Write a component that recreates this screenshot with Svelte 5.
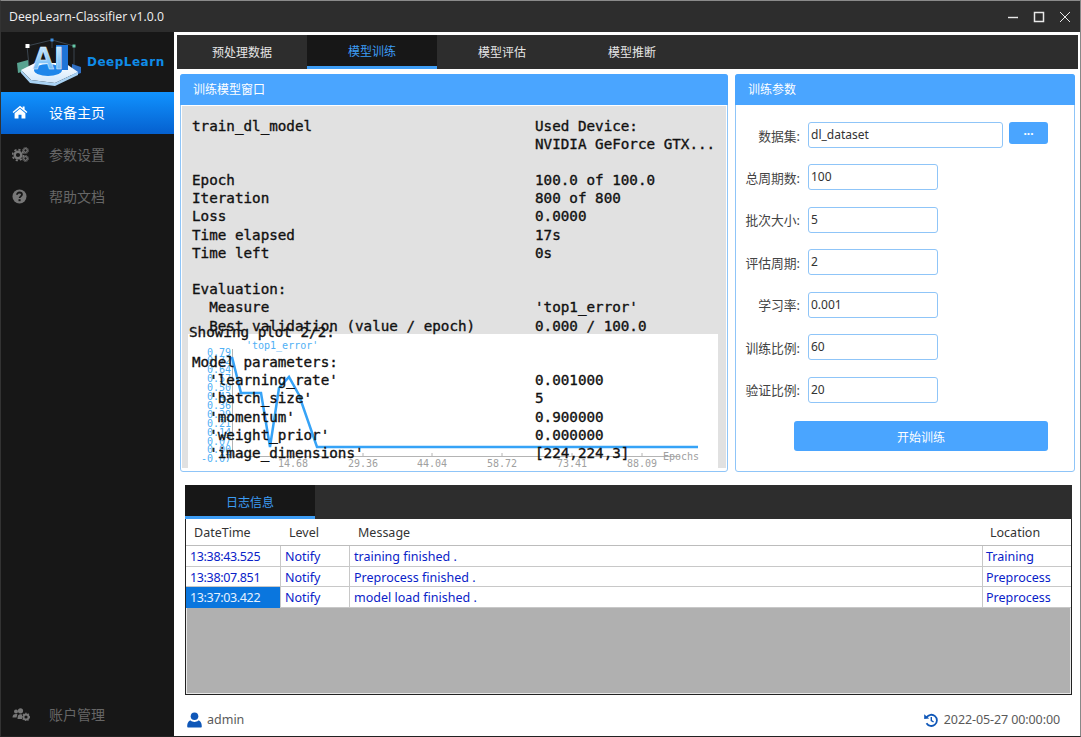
<script>
  const navTop = [
    { id: 'home', label: '设备主页', active: true },
    { id: 'cogs', label: '参数设置' },
    { id: 'help', label: '帮助文档' }
  ];
  const tabs = ['预处理数据', '模型训练', '模型评估', '模型推断'];
  const lines = [
    ['train_dl_model', 'Used Device:'],
    ['', 'NVIDIA GeForce GTX...'],
    ['', ''],
    ['Epoch', '100.0 of 100.0'],
    ['Iteration', '800 of 800'],
    ['Loss', '0.0000'],
    ['Time elapsed', '17s'],
    ['Time left', '0s'],
    ['', ''],
    ['Evaluation:', ''],
    ['  Measure', "'top1_error'"],
    ['  Best validation (value / epoch)', '0.000 / 100.0'],
    ['', ''],
    ['Model parameters:', ''],
    ["  'learning_rate'", '0.001000'],
    ["  'batch_size'", '5'],
    ["  'momentum'", '0.900000'],
    ["  'weight_prior'", '0.000000'],
    ["  'image_dimensions'", '[224,224,3]']
  ];
  const yLabels = ['0.79','0.72','0.64','0.57','0.50','0.43','0.36','0.29','0.21','0.14','0.07','0.00','-0.07'];
  const xLabels = [['14.68',105],['29.36',175],['44.04',244],['58.72',314],['73.41',384],['88.09',454]];
  const fields = [['总周期数:', '100'], ['批次大小:', '5'], ['评估周期:', '2'], ['学习率:', '0.001'], ['训练比例:', '60'], ['验证比例:', '20']];
  const logs = [
    ['13:38:43.525', 'Notify', 'training finished .', 'Training'],
    ['13:38:07.851', 'Notify', 'Preprocess finished .', 'Preprocess'],
    ['13:37:03.422', 'Notify', 'model load finished .', 'Preprocess']
  ];
</script>

<div class="window">
  <header class="titlebar">
    <span class="title">DeepLearn-Classifier v1.0.0</span>
    <div class="winbtns">
      <svg width="12" height="12" viewBox="0 0 12 12"><path d="M1 6.500h10" stroke="#e8e8e8" stroke-width="1.400"/></svg>
      <svg width="12" height="12" viewBox="0 0 12 12"><rect x="1.500" y="1.500" width="9" height="9" fill="none" stroke="#e8e8e8" stroke-width="1.500"/></svg>
      <svg width="12" height="12" viewBox="0 0 12 12"><path d="M1 1l10 10M11 1L1 11" stroke="#e8e8e8" stroke-width="1"/></svg>
    </div>
  </header>

  <div class="body">
    <aside class="sidebar">
      <div class="logo">
        <svg width="155" height="60" viewBox="0 0 155 60">
          <defs>
            <linearGradient id="ai" x1="0" y1="0" x2="0" y2="1"><stop offset="0" stop-color="#d8f0ff"/><stop offset="1" stop-color="#55adf5"/></linearGradient>
            <linearGradient id="base" x1="0" y1="0" x2="0" y2="1"><stop offset="0" stop-color="#ffffff"/><stop offset="1" stop-color="#cfe6fb"/></linearGradient>
          </defs>
          <path d="M12 14L37 8 59 14 59 38M12 14L14 34M37 8V16" fill="none" stroke="#44525e" stroke-width="0.8"/>
          <rect x="10.500" y="12" width="4" height="4" fill="#fff"/>
          <rect x="57.500" y="12.500" width="3" height="3" fill="#66c9a8"/>
          <rect x="35.500" y="6.500" width="3" height="3" fill="#3f8fe0"/>
          <path d="M2 31l11-3 1 10-11 3z" fill="#58a391"/>
          <path d="M57 32l9 3v6l-9 3z" fill="#2f6fc4"/>
          <path d="M6 38 L20 31 H50 L63 40 L40 51 L16 48z" fill="url(#base)"/>
          <path d="M6 38 L16 48 L40 51 L63 40 L63 43 L40 54 L15 51 L6 41z" fill="#a9d2f3"/>
          <ellipse cx="33" cy="38" rx="14" ry="6" fill="#1e86ea"/>
          <rect x="41" y="13" width="12" height="25" fill="#1e74d8"/>
          <text class="logo-ai" x="17" y="37">AI</text>
          <text class="logo-name" x="72" y="34">DeepLearn</text>
        </svg>
      </div>
      {#each navTop as item}
        <div class="nav" class:active={item.active}>
          <span class="nav-ico">
            {#if item.id === 'home'}
              <svg width="16" height="14" viewBox="0 0 16 14"><path d="M8 .8L0.600 7l.9 1.100L8 2.700l6.500 5.400.9-1.100L12.600 4.600V1.500h-1.900v1.500z" fill="#fff"/><path d="M2.600 8.300L8 3.800l5.400 4.500V13.500H9.500V9.800h-3v3.700H2.600z" fill="#fff"/></svg>
            {:else if item.id === 'cogs'}
              <svg width="17" height="15" viewBox="0 0 17 15"><circle cx="6" cy="8" r="3.300" fill="none" stroke="#777" stroke-width="2.400"/><circle cx="6" cy="8" r="5.400" fill="none" stroke="#777" stroke-width="1.600" stroke-dasharray="2.200 2"/><circle cx="13.500" cy="3.500" r="1.800" fill="none" stroke="#777" stroke-width="1.300"/><circle cx="13.500" cy="3.500" r="3" fill="none" stroke="#777" stroke-width="1" stroke-dasharray="1.200 1.100"/><circle cx="13.500" cy="11.500" r="1.800" fill="none" stroke="#777" stroke-width="1.300"/><circle cx="13.500" cy="11.500" r="3" fill="none" stroke="#777" stroke-width="1" stroke-dasharray="1.200 1.100"/></svg>
            {:else}
              <svg width="15" height="15" viewBox="0 0 15 15"><circle cx="7.500" cy="7.500" r="7" fill="#777"/><path d="M5 5.700c0-1.400 1.100-2.200 2.500-2.200s2.500.9 2.500 2.100c0 1.700-2.400 1.800-2.400 3.400" fill="none" stroke="#171717" stroke-width="1.800"/><rect x="6.500" y="10.200" width="2.100" height="2" fill="#171717"/></svg>
            {/if}
          </span>
          <span>{item.label}</span>
        </div>
      {/each}
      <div class="nav account">
        <span class="nav-ico">
          <svg width="18" height="13" viewBox="0 0 18 13"><circle cx="4" cy="3.500" r="2" fill="#777"/><circle cx="8.500" cy="2.800" r="2.600" fill="#777"/><path d="M0.500 9.500c0-2.500 1.300-3.500 3.500-3.500 1 0 1.500.3 1.500.3L4.500 9.500zM5.500 11c0-3.500 1-4.800 3-4.800 1 0 1.500.3 1.500.3l.2 4.500z" fill="#777"/><circle cx="14" cy="9" r="2.500" fill="none" stroke="#777" stroke-width="1.800"/><circle cx="14" cy="9" r="3.700" fill="none" stroke="#777" stroke-width="1.100" stroke-dasharray="1.400 1.300"/></svg>
        </span>
        <span>账户管理</span>
      </div>
    </aside>

    <main class="main">
      <nav class="tabs">
        {#each tabs as t, i}
          <div class="tab" class:on={i === 1}>{t}</div>
        {/each}
      </nav>

      <div class="panels">
        <section class="panel train">
          <h2 class="panel-head">训练模型窗口</h2>
          <div class="console">
            <div class="plot">
              <svg width="530" height="134" viewBox="0 0 530 134">
                <text class="c-title" x="58" y="15">'top1_error'</text>
                {#each yLabels as l, i}
                  <text class="c-y" x="43" y={21.500 + i * 8.9}>{l}</text>
                {/each}
                <path d="M44.500 15V122.500M44.500 122.500H492" fill="none" stroke="#b4b4b4"/>
                {#each xLabels as [l, x]}
                  <path d={`M${x} 119v3`} stroke="#b4b4b4"/>
                  <text class="c-x" x={x} y="133">{l}</text>
                {/each}
                <text class="c-e" x="475" y="126">Epochs</text>
                <polyline points="44,23 53,59 73,59 82,113 91,54 101,43 111,61 129,113 510,113" fill="none" stroke="#36a3f7" stroke-width="2.500"/>
              </svg>
            </div>
            <div class="showing">Showing plot 2/2:</div>
            <div class="stats">
              {#each lines as [a, b]}
                <div class="l">{a}</div>
                <div class="r">{b}</div>
              {/each}
            </div>
          </div>
        </section>

        <section class="panel params">
          <h2 class="panel-head">训练参数</h2>
          <div class="form">
            <div class="row first">
              <span class="lab">数据集:</span>
              <div class="input wide">dl_dataset</div>
              <button class="dots">···</button>
            </div>
            {#each fields as [k, v]}
              <div class="row">
                <span class="lab">{k}</span>
                <div class="input">{v}</div>
              </div>
            {/each}
            <button class="start">开始训练</button>
          </div>
        </section>
      </div>

      <section class="log">
        <div class="log-tabs"><div class="log-tab">日志信息</div></div>
        <div class="table">
          <div class="tr head">
            <div class="c1">DateTime</div><div class="c2">Level</div><div class="c3">Message</div><div class="c4">Location</div>
          </div>
          {#each logs as row, i}
            <div class="tr data">
              <div class="c1" class:sel={i === 2}>{row[0]}</div>
              <div class="c2">{row[1]}</div>
              <div class="c3">{row[2]}</div>
              <div class="c4">{row[3]}</div>
            </div>
          {/each}
          <div class="empty"></div>
        </div>
      </section>

      <footer class="status">
        <div class="st">
          <svg width="15" height="16" viewBox="0 0 15 16"><circle cx="7.500" cy="4.200" r="3.800" fill="#0f57b8"/><path d="M1 15.500c-.5 0-.8-.4-.8-1 0-3.500 1.500-6 3.500-6 1 1 2.400 1.400 3.800 1.400s2.800-.4 3.800-1.400c2 0 3.500 2.500 3.500 6 0 .6-.3 1-.8 1z" fill="#0f57b8"/></svg>
          <span>admin</span>
        </div>
        <div class="st">
          <svg width="14" height="14" viewBox="0 0 14 14"><path d="M2.600 4.300A5.600 5.600 0 1 1 2.500 10.300" fill="none" stroke="#0f57b8" stroke-width="1.800"/><path d="M0.200 1.200L5.200 5.400 0.200 5.900z" fill="#0f57b8"/><path d="M7.300 4v3.500l2.300 1.500" fill="none" stroke="#0f57b8" stroke-width="1.400"/></svg>
          <span class="date">2022-05-27 00:00:00</span>
        </div>
      </footer>
    </main>
  </div>
</div>

<style>
  :global(body) { margin: 0; background: #fff; }
  .window {
    width: 1081px; height: 737px; box-sizing: border-box; overflow: hidden;
    display: flex; flex-direction: column;
    border-top: 1px solid #8a8a8a; border-bottom: 1px solid #222; border-left: 1px solid #333; border-right: 1px solid #888;
    font-family: "Noto Sans", "Noto Sans CJK SC", sans-serif; background: #fff;
  }
  .titlebar {
    height: 31px; flex: none; display: flex; align-items: center; justify-content: space-between;
    background: #2d2d2d; color: #f0f0f0; font-size: 12.250px; padding: 0 8px;
    font-family: "Open Sans", "Noto Sans CJK SC", sans-serif;
  }
  .winbtns { display: flex; gap: 14px; align-items: center; padding-right: 1px; }
  .body { flex: 1; display: flex; min-height: 0; }

  .sidebar { width: 173px; flex: none; background: #171717; display: flex; flex-direction: column; }
  .logo { height: 60px; padding-left: 14px; flex: none; }
  .logo svg { display: block; }
  .logo-ai { font: bold 31px "Liberation Sans", sans-serif; fill: url(#ai); stroke: #e6f4ff; stroke-width: 0.5; }
  .logo-name { font: bold 12px "DejaVu Sans", sans-serif; fill: #0f8ce8; letter-spacing: 0.5px; }
  .nav { height: 42px; display: flex; align-items: center; color: #666; font-size: 14px; flex: none; box-sizing: border-box; padding-bottom: 2px; }
  .nav.active { color: #fff; background: linear-gradient(#1193ff, #0560cf); }
  .nav-ico { width: 48px; padding-left: 11px; box-sizing: border-box; display: flex; align-items: center; }
  .account { margin-top: auto; padding-bottom: 2px; }

  .main { flex: 1; min-width: 0; display: flex; flex-direction: column; padding: 3px 2px 0 3px; }
  .tabs { height: 34px; flex: none; display: flex; background: #2d2d2d; }
  .tab { width: 130px; display: flex; align-items: center; justify-content: center; color: #e6e6e6; font-size: 12px; box-sizing: border-box; }
  .tab.on { background: #171717; color: #3d9df5; border-bottom: 3px solid #3d9df5; }

  .panels { display: flex; gap: 7px; margin: 5px 3px 0 3px; height: 398px; flex: none; }
  .panel { border: 1px solid #8fc5f8; border-radius: 3px; box-sizing: border-box; display: flex; flex-direction: column; background: #fff; }
  .panel-head { margin: -1px -1px 0; height: 31px; flex: none; background: #4aa5ff; color: #fff; font-size: 12px; font-weight: 400; line-height: 31px; padding-left: 13px; border-radius: 3px 3px 0 0; }
  .train { width: 548px; }
  .params { width: 340px; }

  .console { position: relative; margin: 1px 1px 3px; flex: 1; background: #e1e1e1; font: 400 14.250px/18.200px "DejaVu Sans Mono", monospace; color: #111; -webkit-text-stroke: 0.35px #111; overflow: hidden; }
  .plot { position: absolute; left: 6px; top: 228px; width: 530px; height: 134px; background: #fff; -webkit-text-stroke: 0; }
  .plot svg { display: block; overflow: hidden; }
  .c-title { font: 10px "DejaVu Sans Mono", monospace; fill: #4fb0f5; }
  .c-y { font: 10px "DejaVu Sans Mono", monospace; fill: #4fb0f5; text-anchor: end; }
  .c-x { font: 10px "DejaVu Sans Mono", monospace; fill: #a0a0a0; text-anchor: middle; }
  .c-e { font: 10px "DejaVu Sans Mono", monospace; fill: #a0a0a0; }
  .showing { position: absolute; left: 7px; top: 217px; }
  .stats { position: absolute; left: 10px; top: 10.500px; display: grid; grid-template-columns: 343px 200px; grid-auto-rows: 18.200px; white-space: pre; }
  .stats .l, .stats .r { height: 18.200px; }

  .form { padding: 17px 0 0; display: flex; flex-direction: column; }
  .row { display: flex; align-items: center; height: 26px; margin-bottom: 16.500px; }
  .row.first { margin-bottom: 16px; }
  .lab { width: 64px; text-align: right; font-size: 12.800px; color: #444; margin-right: 8px; flex: none; }
  .input { width: 130px; height: 26px; box-sizing: border-box; border: 1px solid #8fc5f8; border-radius: 3px; font-size: 12px; line-height: 24px; padding-left: 2px; color: #333; }
  .input.wide { width: 195px; }
  .dots { width: 39px; height: 22px; margin: -4px 0 0 6px; background: #4aa5ff; border: 0; border-radius: 3px; color: #fff; font-size: 12px; font-weight: 700; font-family: inherit; padding: 0; }
  .start { width: 254px; height: 30px; margin: 2px 0 0 58px; background: #4aa5ff; border: 0; border-radius: 3px; color: #fff; font-size: 12px; font-family: "Noto Sans CJK SC", sans-serif; padding: 0; }

  .log { margin: 13px 6px 0 8px; height: 210px; flex: none; display: flex; flex-direction: column; }
  .log-tabs { height: 34px; flex: none; background: #2d2d2d; display: flex; }
  .log-tab { width: 130px; box-sizing: border-box; background: #171717; color: #3d9df5; font-size: 12px; display: flex; align-items: center; justify-content: center; padding-top: 3px; border-bottom: 3px solid #3d9df5; }
  .table { flex: 1; display: flex; flex-direction: column; border: 1px solid #222; border-top: 0; background: #fff; font-size: 12.500px; min-height: 0; }
  .tr { display: grid; grid-template-columns: 95px 69px 633px 1fr; flex: none; }
  .tr.head { height: 27px; line-height: 26px; color: #333; border-top: 1px solid #fff; box-sizing: border-box; border-bottom: 1px solid #bcbcbc; }
  .head .c1 { padding-left: 8px; }
  .head .c2 { padding-left: 8px; }
  .head .c3 { padding-left: 8px; }
  .head .c4 { padding-left: 7px; }
  .tr.data { height: 20.600px; line-height: 21px; color: #0a22c8; box-sizing: border-box; border-bottom: 1px solid #c8c8c8; }
  .data > div { padding-left: 4px; border-right: 1px solid #c8c8c8; }
  .data .c1 { padding-left: 4px; letter-spacing: -0.350px; }
  .data .c4 { border-right: 0; padding-left: 3px; }
  .data .sel { background: #0a76de; color: #e6f2ff; }
  .empty { flex: 1; background: #b0b0b0; border: 1px solid #e8e8e8; border-top: 0; }

  .status { flex: 1; display: flex; align-items: center; justify-content: space-between; padding: 8px 18px 0 10px; font-size: 12.500px; color: #5a5a5a; }
  .st { display: flex; align-items: center; gap: 5px; }
  .st + .st { gap: 6px; }
  .date { letter-spacing: -0.100px; }
</style>
